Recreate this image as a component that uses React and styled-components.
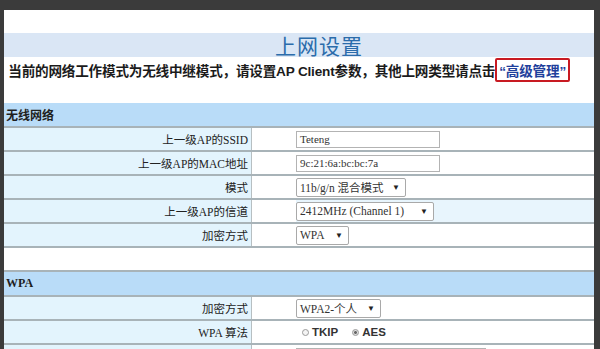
import styled, { createGlobalStyle } from "styled-components";

const GlobalStyle = createGlobalStyle`
  html, body {
    margin: 0;
    padding: 0;
    background: #3b3b3b;
  }
  body {
    font-family: "Liberation Serif", "Noto Sans CJK SC", serif;
  }
`;

const Screen = styled.div`
  margin: 10px 6px 0 4px;
  width: 590px;
  height: 339px;
  background: #ffffff;
  overflow: hidden;
  display: flex;
  flex-direction: column;
`;

const TopSpace = styled.div`
  height: 23px;
  flex: none;
`;

const TitleBar = styled.div`
  height: 24px;
  flex: none;
  background: #dae6f5;
  display: flex;
  align-items: center;
  justify-content: center;
  padding-left: 40px;
`;

const Title = styled.h1`
  margin: 0;
  font-family: "Noto Sans CJK SC", sans-serif;
  font-weight: 400;
  font-size: 21px;
  line-height: 24px;
  color: #2b6cab;
  letter-spacing: 1px;
`;

const Notice = styled.div`
  height: 26px;
  flex: none;
  display: flex;
  align-items: center;
  justify-content: flex-end;
  padding-right: 24px;
  margin-left: -6px;
  white-space: nowrap;
  overflow: hidden;
  font-family: "Liberation Sans", "Noto Sans CJK SC", sans-serif;
  font-weight: 700;
  font-size: 13.6px;
  letter-spacing: -0.2px;
  color: #1b1b1b;
`;

const LinkBox = styled.span`
  display: inline-flex;
  align-items: center;
  height: 20px;
  padding: 0 2px;
  border: 2.5px solid #c81a22;
  border-radius: 2px;
  color: #1f3f9c;
`;

const Gap = styled.div`
  height: ${(p) => p.h}px;
  flex: none;
  border-bottom: ${(p) => (p.line ? "2px solid #a8b3b8" : "none")};
`;

const Section = styled.div`
  height: 23px;
  flex: none;
  background: #b9dcf8;
  border-bottom: 2px solid #a8b3b8;
  display: flex;
  align-items: center;
  padding-left: 2px;
  font-family: "Liberation Serif", "Noto Sans CJK SC", serif;
  font-weight: 700;
  font-size: 12px;
  color: #1e1e1e;
`;

const Row = styled.div`
  height: 22px;
  flex: none;
  display: grid;
  grid-template-columns: 248px 44px 1fr;
  border-bottom: 2px solid #a8b3b8;
  font-size: 11.5px;
  color: #222;
`;

const Label = styled.div`
  background: #e3f4fd;
  border-right: 1px solid #b7bfc2;
  display: flex;
  align-items: center;
  justify-content: flex-end;
  padding-right: 3px;
`;

const Spacer = styled.div`
  background: #ffffff;
`;

const Value = styled.div`
  background: ${(p) => (p.hl ? "#e8f5fd" : "#ffffff")};
  display: flex;
  align-items: center;
  gap: 14px;
`;

const TextBox = styled.div`
  width: ${(p) => p.w}px;
  height: 17px;
  box-sizing: border-box;
  border: 1px solid #b3b3b3;
  background: #fff;
  display: flex;
  align-items: center;
  padding-left: 3px;
  font-size: 11px;
  color: #333;
`;

const Select = styled.div`
  width: ${(p) => p.w}px;
  height: 19px;
  box-sizing: border-box;
  border: 1px solid #a9a9a9;
  border-radius: 2px;
  background: #fff;
  display: flex;
  align-items: center;
  justify-content: space-between;
  padding: 0 5px 0 3px;
  font-size: 11.5px;
  color: #333;
`;

const Arrow = styled.span`
  font-size: 8px;
  color: #222;
`;

const Radio = styled.label`
  display: flex;
  align-items: center;
  gap: 3px;
  margin-left: ${(p) => p.ml || 0}px;
  font-family: "Liberation Sans", sans-serif;
  font-weight: 700;
  font-size: 11.5px;
  color: #333;
`;

const Dot = styled.span`
  width: 7px;
  height: 7px;
  border-radius: 50%;
  box-sizing: border-box;
  border: 1px solid #9a9a9a;
  background: ${(p) => (p.on ? "radial-gradient(#666 35%, #ddd 45%)" : "#f4f4f4")};
`;

function FieldRow({ label, hl, children }) {
  return (
    <Row>
      <Label>{label}</Label>
      <Spacer />
      <Value hl={hl}>{children}</Value>
    </Row>
  );
}

function Dropdown({ w, text }) {
  return (
    <Select w={w}>
      <span>{text}</span>
      <Arrow>▼</Arrow>
    </Select>
  );
}

export default function App() {
  return (
    <>
      <GlobalStyle />
      <Screen>
        <TopSpace />
        <TitleBar>
          <Title>上网设置</Title>
        </TitleBar>
        <Notice>
          当前的网络工作模式为无线中继模式，请设置AP Client参数，其他上网类型请点击
          <LinkBox>“高级管理”</LinkBox>
        </Notice>
        <Gap h={20} />
        <Section>无线网络</Section>
        <FieldRow label="上一级AP的SSID">
          <TextBox w={144}>Teteng</TextBox>
        </FieldRow>
        <FieldRow label="上一级AP的MAC地址">
          <TextBox w={144}>9c:21:6a:bc:bc:7a</TextBox>
        </FieldRow>
        <FieldRow label="模式">
          <Dropdown w={110} text="11b/g/n 混合模式" />
        </FieldRow>
        <FieldRow label="上一级AP的信道" hl>
          <Dropdown w={138} text="2412MHz (Channel 1)" />
        </FieldRow>
        <FieldRow label="加密方式">
          <Dropdown w={53} text="WPA" />
        </FieldRow>
        <Gap h={22} line />
        <Section>WPA</Section>
        <FieldRow label="加密方式">
          <Dropdown w={85} text="WPA2-个人" />
        </FieldRow>
        <FieldRow label="WPA 算法">
          <Radio ml={6}>
            <Dot />
            TKIP
          </Radio>
          <Radio>
            <Dot on />
            AES
          </Radio>
        </FieldRow>
        <FieldRow label="">
          <TextBox w={190} />
        </FieldRow>
      </Screen>
    </>
  );
}
